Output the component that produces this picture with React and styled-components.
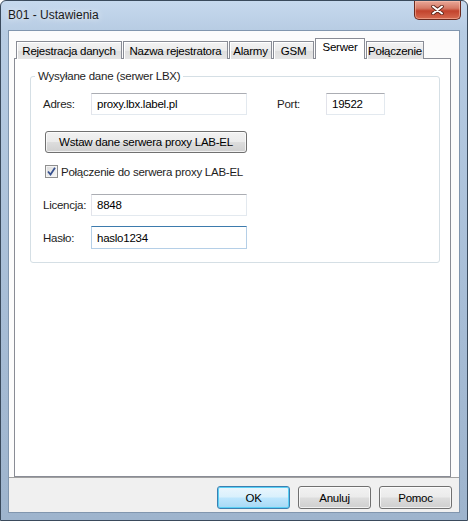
import React from 'react';
import styled, { createGlobalStyle, css } from 'styled-components';

const GlobalStyle = createGlobalStyle`
  html, body {
    margin: 0;
    padding: 0;
    background: #ffffff;
    overflow: hidden;
  }
  * { box-sizing: border-box; }
`;

const TABS = [
  { label: 'Rejestracja danych', width: 106 },
  { label: 'Nazwa rejestratora', width: 105 },
  { label: 'Alarmy', width: 43 },
  { label: 'GSM', width: 41 },
  { label: 'Serwer', width: 50, active: true },
  { label: 'Połączenie', width: 58 },
];

const App = () => {
  return (
    <>
      <GlobalStyle />
      <Window>
        <TitleBar>
          <Title>B01 - Ustawienia</Title>
          <CloseButton>
            <svg width="13" height="10" viewBox="0 0 13 10">
              <path d="M2 1.5 L11 8.5 M11 1.5 L2 8.5" stroke="#5a2318" strokeWidth="3.6" strokeLinecap="round" />
              <path d="M2 1.5 L11 8.5 M11 1.5 L2 8.5" stroke="#ffffff" strokeWidth="2" strokeLinecap="round" />
            </svg>
          </CloseButton>
        </TitleBar>

        <Client>
          <TabArea>
            <TabStrip>
              {TABS.map((t) => (
                <Tab key={t.label} $width={t.width} $active={t.active}>
                  {t.label}
                </Tab>
              ))}
            </TabStrip>

            <TabPage>
              <GroupBox>
                <GroupTitle>Wysyłane dane (serwer LBX)</GroupTitle>

                <FieldRow>
                  <FieldLabel>Adres:</FieldLabel>
                  <TextBox $width={156}>proxy.lbx.label.pl</TextBox>
                  <FieldLabel $inline>Port:</FieldLabel>
                  <TextBox $width={59}>19522</TextBox>
                </FieldRow>

                <WideButton>Wstaw dane serwera proxy LAB-EL</WideButton>

                <CheckRow>
                  <CheckBox>
                    <svg width="9" height="9" viewBox="0 0 9 9">
                      <path d="M1 4.5 L3.5 7.5 L8 0.8" fill="none" stroke="#37518f" strokeWidth="1.8" />
                    </svg>
                  </CheckBox>
                  Połączenie do serwera proxy LAB-EL
                </CheckRow>

                <FieldRow $top={16}>
                  <FieldLabel>Licencja:</FieldLabel>
                  <TextBox $width={156}>8848</TextBox>
                </FieldRow>

                <FieldRow $top={10}>
                  <FieldLabel>Hasło:</FieldLabel>
                  <TextBox $width={156} $focused>haslo1234</TextBox>
                </FieldRow>
              </GroupBox>
            </TabPage>
          </TabArea>

          <Footer>
            <DialogButton $default>OK</DialogButton>
            <DialogButton>Anuluj</DialogButton>
            <DialogButton>Pomoc</DialogButton>
          </Footer>
        </Client>
      </Window>
    </>
  );
};

const Window = styled.div`
  width: 468px;
  height: 521px;
  display: flex;
  flex-direction: column;
  border: 1px solid #3a4a5c;
  border-radius: 6px 6px 0 0;
  background: linear-gradient(180deg, #c6d9ee 0, #b7cce3 30px, #a7bdd6 60%, #9eb4cd 100%);
  font-family: "Liberation Sans", Arial, sans-serif;
  font-size: 11.5px;
  letter-spacing: -0.25px;
  color: #000;
`;

const TitleBar = styled.div`
  height: 29px;
  display: flex;
  align-items: flex-start;
  padding-left: 7px;
`;

const Title = styled.div`
  flex: 1;
  line-height: 29px;
  font-size: 12px;
  letter-spacing: 0;
  color: #1a1a1a;
  text-shadow: 0 0 6px rgba(255, 255, 255, 0.9);
`;

const CloseButton = styled.div`
  width: 47px;
  height: 19px;
  margin-right: 6px;
  display: flex;
  align-items: center;
  justify-content: center;
  border: 1px solid #6b2a1f;
  border-top: none;
  border-radius: 0 0 5px 5px;
  background: linear-gradient(180deg, #e9a899 0, #d57a66 40%, #c2432d 55%, #d66a50 100%);
  box-shadow: inset 0 0 0 1px rgba(255, 200, 180, 0.5);
`;

const Client = styled.div`
  flex: 1;
  margin: 0 7px 7px 7px;
  display: flex;
  flex-direction: column;
  background: #f0f0f0;
  border: 1px solid #8196ae;
`;

const TabArea = styled.div`
  height: 446px;
  display: flex;
  flex-direction: column;
  padding: 7px 8px 0 5px;
  background: #fcfcfc;
`;

const TabStrip = styled.div`
  display: flex;
  align-items: flex-end;
  height: 21px;
  padding-left: 2px;
  position: relative;
  z-index: 1;
  margin-bottom: -1px;
`;

const Tab = styled.div`
  width: ${(p) => p.$width}px;
  height: 18px;
  margin-right: 1px;
  display: flex;
  align-items: center;
  justify-content: center;
  white-space: nowrap;
  color: #000;
  border: 1px solid #898c95;
  border-bottom: none;
  background: linear-gradient(180deg, #f3f3f3 0, #ebebeb 50%, #dedede 51%, #e5e5e5 100%);
  box-shadow: inset 1px 1px 0 #fff;
  ${(p) =>
    p.$active &&
    css`
      height: 21px;
      background: #ffffff;
      box-shadow: none;
      align-items: flex-start;
      padding-top: 2px;
    `}
`;

const TabPage = styled.div`
  flex: 1;
  background: #ffffff;
  border: 1px solid #898c95;
  padding: 17px 10px 0 15px;
`;

const GroupBox = styled.div`
  position: relative;
  height: 187px;
  border: 1px solid #d5dfe5;
  border-radius: 3px;
  padding: 16px 0 0 12px;
  display: flex;
  flex-direction: column;
  align-items: flex-start;
`;

const GroupTitle = styled.span`
  position: absolute;
  top: -9px;
  left: 4px;
  padding: 0 3px;
  background: #ffffff;
  line-height: 16px;
  color: #1e1e1e;
`;

const FieldRow = styled.div`
  display: flex;
  align-items: center;
  margin-top: ${(p) => p.$top || 0}px;
`;

const FieldLabel = styled.span`
  width: ${(p) => (p.$inline ? 49 : 48)}px;
  margin-left: ${(p) => (p.$inline ? 30 : 0)}px;
  color: #1e1e1e;
`;

const TextBox = styled.div`
  width: ${(p) => p.$width}px;
  height: 22px;
  display: flex;
  align-items: center;
  padding-left: 5px;
  background: #ffffff;
  border: 1px solid #e3e9ef;
  border-top-color: #abadb3;
  border-left-color: #e2e3ea;
  color: #000;
  ${(p) =>
    p.$focused &&
    css`
      border-color: #b5cfe7;
      border-top-color: #3d7bad;
      height: 23px;
    `}
`;

const buttonFace = css`
  display: flex;
  align-items: center;
  justify-content: center;
  border: 1px solid #707070;
  border-radius: 3px;
  background: linear-gradient(180deg, #f2f2f2 0, #ebebeb 48%, #dddddd 52%, #cfcfcf 100%);
  box-shadow: inset 0 0 0 1px rgba(255, 255, 255, 0.7);
  color: #000;
`;

const WideButton = styled.div`
  ${buttonFace};
  width: 202px;
  height: 22px;
  margin: 16px 0 0 2px;
`;

const CheckRow = styled.div`
  display: flex;
  align-items: center;
  gap: 3px;
  margin: 12px 0 0 2px;
  color: #1e1e1e;
`;

const CheckBox = styled.span`
  width: 13px;
  height: 13px;
  display: flex;
  align-items: center;
  justify-content: center;
  border: 1px solid #8f8f8f;
  background: linear-gradient(135deg, #dcdcdc 0, #f6f6f6 100%);
  box-shadow: inset 0 0 0 1px #f4f4f4;
`;

const Footer = styled.div`
  flex: 1;
  display: flex;
  justify-content: flex-end;
  align-items: flex-start;
  gap: 8px;
  padding: 8px 7px 0 0;
  border-top: 1px solid #a0a0a0;
`;

const DialogButton = styled.div`
  ${buttonFace};
  width: 73px;
  height: 23px;
  ${(p) =>
    p.$default &&
    css`
      border-color: #3c7fb1;
      background: linear-gradient(180deg, #eaf6fd 0, #d9f0fc 48%, #bee6fd 52%, #a7d9f5 100%);
      box-shadow: inset 0 0 0 1px #5ad0f5;
    `}
`;

export default App;
